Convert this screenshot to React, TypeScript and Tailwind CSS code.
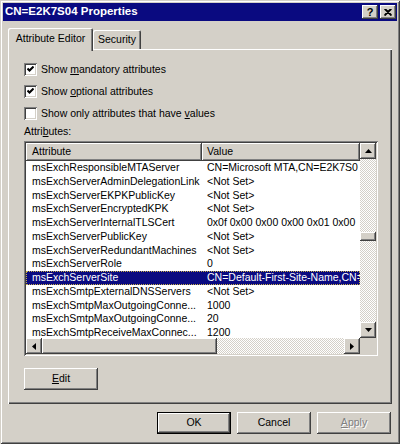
import React from 'react';

const raised =
  'shadow-[inset_-1px_-1px_#404040,inset_1px_1px_#ffffff,inset_-2px_-2px_#808080,inset_2px_2px_#d4d0c8]';
const sunken =
  'shadow-[inset_1px_1px_#808080,inset_-1px_-1px_#ffffff,inset_2px_2px_#404040,inset_-2px_-2px_#d4d0c8]';
const dither =
  'bg-[repeating-conic-gradient(#d4d0c8_0%_25%,#ffffff_0%_50%)] bg-[length:2px_2px]';

const rows = [
  ['msExchResponsibleMTAServer', 'CN=Microsoft MTA,CN=E2K7S0'],
  ['msExchServerAdminDelegationLink', '<Not Set>'],
  ['msExchServerEKPKPublicKey', '<Not Set>'],
  ['msExchServerEncryptedKPK', '<Not Set>'],
  ['msExchServerInternalTLSCert', '0x0f 0x00 0x00 0x00 0x01 0x00'],
  ['msExchServerPublicKey', '<Not Set>'],
  ['msExchServerRedundantMachines', '<Not Set>'],
  ['msExchServerRole', '0'],
  ['msExchServerSite', 'CN=Default-First-Site-Name,CN='],
  ['msExchSmtpExternalDNSServers', '<Not Set>'],
  ['msExchSmtpMaxOutgoingConne...', '1000'],
  ['msExchSmtpMaxOutgoingConne...', '20'],
  ['msExchSmtpReceiveMaxConnec...', '1200'],
];

const Arrow = ({ dir }: { dir: 'up' | 'down' | 'left' | 'right' }) => {
  const vertical = dir === 'up' || dir === 'down';
  const pts = {
    up: '3.5,0 7,4 0,4',
    down: '0,0 7,0 3.5,4',
    left: '4,0 4,7 0,3.5',
    right: '0,0 0,7 4,3.5',
  }[dir];
  return (
    <svg width={vertical ? 7 : 4} height={vertical ? 4 : 7} viewBox={vertical ? '0 0 7 4' : '0 0 4 7'}>
      <polygon points={pts} fill="#000" />
    </svg>
  );
};

const ScrollBtn = ({ dir }: { dir: 'up' | 'down' | 'left' | 'right' }) => (
  <div className={`w-[16px] h-[16px] shrink-0 bg-[#d4d0c8] ${raised} flex items-center justify-center`}>
    <Arrow dir={dir} />
  </div>
);

const CheckBox = ({ checked, children }: { checked: boolean; children: React.ReactNode }) => (
  <div className="flex items-center h-[13px]">
    <div className={`w-[13px] h-[13px] bg-white ${sunken} flex items-center justify-center`}>
      {checked && (
        <svg width="7" height="7" viewBox="0 0 7 7">
          <polyline points="0.5,2.5 2.5,4.5 6.5,0.5" stroke="#000" strokeWidth="2" fill="none" />
        </svg>
      )}
    </div>
    <span className="ml-[4px]">{children}</span>
  </div>
);

const Button = ({ children, def, disabled, w = 'w-[74px]' }: { children: React.ReactNode; def?: boolean; disabled?: boolean; w?: string }) => (
  <div
    className={`${w} h-[22px] bg-[#d4d0c8] flex items-center justify-center ${
      def
        ? 'shadow-[inset_1px_1px_#000,inset_-1px_-1px_#000,inset_-2px_-2px_#404040,inset_2px_2px_#ffffff,inset_-3px_-3px_#808080]'
        : raised
    } ${disabled ? 'text-[#808080] [text-shadow:1px_1px_#ffffff]' : 'text-black'}`}
  >
    {children}
  </div>
);

export default function App() {
  return (
    <div className="w-[400px] h-[444px] bg-[#d4d0c8] p-[3px] flex flex-col font-['Liberation_Sans',Arial,sans-serif] text-[10.5px] text-black shadow-[inset_1px_1px_#d4d0c8,inset_-1px_-1px_#404040,inset_2px_2px_#ffffff,inset_-2px_-2px_#808080]">
      {/* title bar */}
      <div className="h-[18px] bg-[#0a0a80] flex items-center justify-between pl-[2px] pr-[1px]">
        <span className="text-white font-bold text-[11.5px]">CN=E2K7S04 Properties</span>
        <div className="flex gap-[2px]">
          <div className={`w-[16px] h-[14px] bg-[#d4d0c8] ${raised} flex items-center justify-center font-bold text-[11px] leading-none`}>?</div>
          <div className={`w-[16px] h-[14px] bg-[#d4d0c8] ${raised} flex items-center justify-center`}>
            <svg width="8" height="7" viewBox="0 0 8 7">
              <path d="M0.5 0 L7.5 7 M7.5 0 L0.5 7 M1.5 0 L7.5 6 M6.5 0 L0.5 6" stroke="#000" strokeWidth="1.2" />
            </svg>
          </div>
        </div>
      </div>

      <div className="px-[5px] pt-[7px] flex flex-col">
        {/* tabs */}
        <div className="h-[21px] flex items-end">
          <div className="relative z-10 w-[85px] h-[23px] -mb-[2px] bg-[#d4d0c8] shadow-[inset_1px_1px_#ffffff,inset_-1px_0_#404040,inset_-2px_0_#808080] rounded-t-[2px] flex items-center justify-center pb-[2px]">
            Attribute Editor
          </div>
          <div className="w-[48px] h-[19px] bg-[#d4d0c8] shadow-[inset_1px_1px_#ffffff,inset_-1px_0_#404040,inset_-2px_0_#808080] rounded-t-[2px] flex items-center justify-center">
            Security
          </div>
        </div>

        {/* panel */}
        <div className="h-[355px] shadow-[inset_1px_1px_#ffffff,inset_-1px_-1px_#404040,inset_-2px_-2px_#808080] pl-[16px] pt-[14px] flex flex-col">
          <div className="flex flex-col gap-[9px]">
            <CheckBox checked>
              Show <u>m</u>andatory attributes
            </CheckBox>
            <CheckBox checked>
              Show <u>o</u>ptional attributes
            </CheckBox>
            <CheckBox checked={false}>
              Show only attributes that have <u>v</u>alues
            </CheckBox>
          </div>
          <div className="mt-[5px] h-[13px] leading-[13px]">
            Attri<u>b</u>utes:
          </div>

          {/* list view */}
          <div className={`mt-[3px] w-[354px] h-[215px] p-[2px] bg-white ${sunken} flex flex-col`}>
            <div className="flex flex-1 min-h-0">
              <div className="flex-1 min-w-0 flex flex-col overflow-hidden">
                <div className="h-[18px] flex shrink-0">
                  <div className={`w-[176px] h-full bg-[#d4d0c8] ${raised} flex items-center pl-[6px]`}>Attribute</div>
                  <div className={`flex-1 h-full bg-[#d4d0c8] ${raised} flex items-center pl-[5px]`}>Value</div>
                </div>
                {rows.map(([a, v], i) => {
                  const sel = i === 8;
                  return (
                    <div
                      key={i}
                      className={`h-[13.75px] shrink-0 flex items-center whitespace-nowrap ${
                        sel ? 'bg-[#0a0a80] text-white outline-1 outline-dotted outline-[#c8b048] -outline-offset-1' : ''
                      }`}
                    >
                      <div className="w-[176px] pl-[6px] overflow-hidden">{a}</div>
                      <div className="flex-1 pl-[5px] overflow-hidden">{v}</div>
                    </div>
                  );
                })}
              </div>
              <div className="w-[16px] flex flex-col">
                <ScrollBtn dir="up" />
                <div className={`h-[73px] ${dither}`} />
                <div className={`h-[9px] bg-[#d4d0c8] ${raised}`} />
                <div className={`flex-1 ${dither}`} />
                <ScrollBtn dir="down" />
              </div>
            </div>
            <div className="h-[16px] flex shrink-0">
              <ScrollBtn dir="left" />
              <div className={`w-[175px] bg-[#d4d0c8] ${raised}`} />
              <div className={`flex-1 ${dither}`} />
              <ScrollBtn dir="right" />
              <div className="w-[16px] bg-[#d4d0c8]" />
            </div>
          </div>

          <div className="mt-[12px]">
            <Button w="w-[74px]">
              <u>E</u>dit
            </Button>
          </div>
        </div>

        {/* footer */}
        <div className="mt-[8px] flex justify-end gap-[6px] pr-[1px]">
          <Button def>OK</Button>
          <Button>Cancel</Button>
          <Button disabled>
            <u>A</u>pply
          </Button>
        </div>
      </div>
    </div>
  );
}
